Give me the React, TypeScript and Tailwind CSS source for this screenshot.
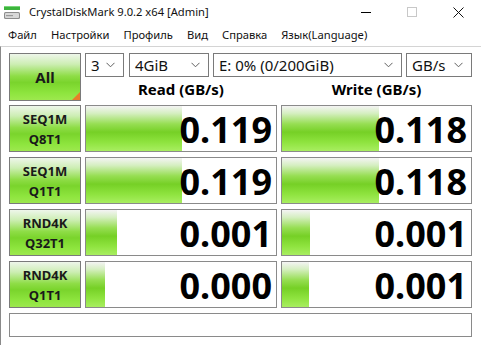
import React from 'react';

type Row = {
  l1: string;
  l2: string;
  read: string;
  readW: number;
  write: string;
  writeW: number;
};

const ROWS: Row[] = [
  { l1: 'SEQ1M', l2: 'Q8T1', read: '0.119', readW: 96, write: '0.118', writeW: 97 },
  { l1: 'SEQ1M', l2: 'Q1T1', read: '0.119', readW: 96, write: '0.118', writeW: 97 },
  { l1: 'RND4K', l2: 'Q32T1', read: '0.001', readW: 31, write: '0.001', writeW: 28 },
  { l1: 'RND4K', l2: 'Q1T1', read: '0.000', readW: 19, write: '0.001', writeW: 27 },
];

const MENU = ['Файл', 'Настройки', 'Профиль', 'Вид', 'Справка', 'Язык(Language)'];

const Chevron = () => (
  <svg width="9" height="6" viewBox="0 0 9 6" className="shrink-0">
    <path d="M0.5 0.8 L4.5 4.8 L8.5 0.8" fill="none" stroke="#606060" strokeWidth="1" />
  </svg>
);

const Combo: React.FC<{ label: string; className: string }> = ({ label, className }) => (
  <div className={`flex items-center justify-between h-[24px] border border-[#7a7a7a] bg-white pl-[5px] pr-[8px] text-[15px] text-[#111] ${className}`}>
    <span>{label}</span>
    <Chevron />
  </div>
);

const Result: React.FC<{ value: string; width: number }> = ({ value, width }) => (
  <div className="relative h-full border border-[#8a8a8a] bg-white overflow-hidden">
    <div
      className="absolute left-0 top-0 bottom-0 bg-[linear-gradient(to_bottom,#f4f4f4_0%,#d6efc2_16%,#96de52_40%,#76d026_58%,#8ee33e_80%,#a8ee60_100%)]"
      style={{ width }}
    />
    <div className="relative flex h-full items-center justify-end pr-[4px] pt-[2px] text-[36px] font-bold leading-[42px] text-black">
      {value}
    </div>
  </div>
);

const TestButton: React.FC<{ l1: string; l2: string }> = ({ l1, l2 }) => (
  <div className="flex h-full flex-col items-center justify-center border border-[#7a7a7a] bg-[linear-gradient(to_bottom,#eef6ea_0%,#cdeeb4_22%,#8edd46_48%,#7ad42c_62%,#8ee53e_85%,#9de84e_100%)] text-[13px] font-bold leading-[20px] text-[#1a1a1a]">
    <span>{l1}</span>
    <span>{l2}</span>
  </div>
);

export default function App() {
  return (
    <div className="w-[481px] h-[345px] overflow-hidden bg-white font-['Noto_Sans','DejaVu_Sans',sans-serif] text-black">
      {/* title bar */}
      <div className="flex h-[24px] items-center">
        <svg width="18" height="16" viewBox="0 0 18 16" className="ml-[3px] mr-[8px]">
          <rect x="1" y="2" width="16" height="4" fill="#3cb43c" />
          <rect x="1" y="2" width="16" height="1" fill="#7ad87a" />
          <rect x="1" y="8" width="16" height="7" rx="1.5" fill="#8c8c8c" />
          <rect x="2" y="9" width="14" height="5" rx="1" fill="#d8d8d8" />
          <rect x="3" y="11" width="7" height="1.2" fill="#9a9a9a" />
        </svg>
        <span className="text-[11.2px] text-[#111]">CrystalDiskMark 9.0.2 x64 [Admin]</span>
        <div className="ml-auto flex items-center">
          <div className="flex h-[24px] w-[46px] items-center justify-center">
            <div className="h-px w-[10px] bg-black" />
          </div>
          <div className="flex h-[24px] w-[46px] items-center justify-center">
            <div className="h-[10px] w-[10px] border border-[#c8c8c8]" />
          </div>
          <div className="flex h-[24px] w-[46px] items-center justify-center">
            <svg width="11" height="11" viewBox="0 0 11 11">
              <path d="M0.5 0.5 L10.5 10.5 M10.5 0.5 L0.5 10.5" stroke="#111" strokeWidth="1" />
            </svg>
          </div>
        </div>
      </div>

      {/* menu bar */}
      <div className="flex h-[22px] items-center gap-[14px] pl-[8px] text-[11.2px] text-[#111]">
        {MENU.map(m => (
          <span key={m}>{m}</span>
        ))}
      </div>

      {/* main panel */}
      <div className="h-[299px] border-t border-l border-t-[#d4d4d4] border-l-[#8a8a8a] pl-[8px] pt-[6px]">
        <div className="flex gap-[4px]">
          <div className="relative flex h-[48px] w-[72px] items-center justify-center border border-[#7a7a7a] bg-[linear-gradient(to_bottom,#eef6ea_0%,#cdeeb4_22%,#8edd46_48%,#7ad42c_62%,#8ee53e_85%,#9de84e_100%)] text-[15px] font-bold text-[#1a1a1a]">
            All
            <div className="absolute bottom-0 right-0 h-0 w-0 border-b-[8px] border-l-[8px] border-b-[#e87f2a] border-l-transparent" />
          </div>
          <div className="flex w-[387px] flex-col">
            <div className="flex h-[24px]">
              <Combo label="3" className="w-[39px]" />
              <Combo label="4GiB" className="ml-[5px] w-[80px]" />
              <Combo label="E: 0% (0/200GiB)" className="ml-[4px] w-[189px]" />
              <Combo label="GB/s" className="ml-[4px] w-[66px]" />
            </div>
            <div className="flex h-[24px] items-center text-[15px] font-bold">
              <div className="w-[192px] text-center">Read (GB/s)</div>
              <div className="ml-[4px] w-[191px] text-center">Write (GB/s)</div>
            </div>
          </div>
        </div>

        <div className="mt-[4px] grid grid-cols-[72px_192px_191px] auto-rows-[47px] gap-x-[4px] gap-y-[5px]">
          {ROWS.map((r, i) => (
            <React.Fragment key={i}>
              <TestButton l1={r.l1} l2={r.l2} />
              <Result value={r.read} width={r.readW} />
              <Result value={r.write} width={r.writeW} />
            </React.Fragment>
          ))}
        </div>

        <div className="mt-[5px] h-[24px] w-[463px] border border-[#8a8a8a] bg-white" />
      </div>
    </div>
  );
}
